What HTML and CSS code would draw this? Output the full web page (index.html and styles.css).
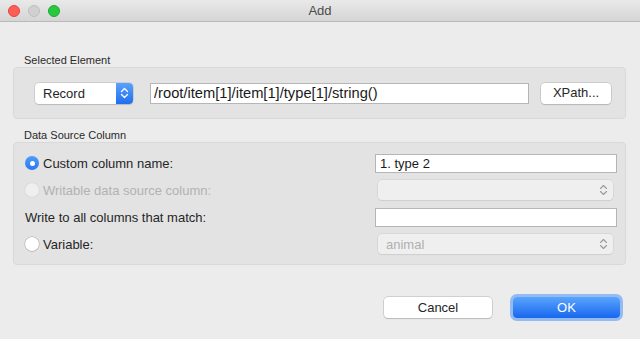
FILE: index.html
```html
<!DOCTYPE html>
<html lang="en">

<head>
    <meta charset="UTF-8">
    <title>Add</title>
    <link rel="stylesheet" href="styles.css">
</head>

<body>
    <div class="window">
        <div class="titlebar">
            <div class="lights">
                <span class="light red"></span>
                <span class="light grey"></span>
                <span class="light green"></span>
            </div>
            <div class="title">Add</div>
        </div>

        <div class="content">
            <div class="group-label first">Selected Element</div>
            <div class="box box-element">
                <div class="popup">
                    <span class="popup-text">Record</span>
                    <span class="popup-arrows">
                        <svg width="9" height="12" viewBox="0 0 9 12">
                            <path d="M1.5 4.5 L4.5 1.5 L7.5 4.5 M1.5 7.5 L4.5 10.5 L7.5 7.5" fill="none" stroke="#fff" stroke-width="1.3" stroke-linecap="round" stroke-linejoin="round"/>
                        </svg>
                    </span>
                </div>
                <input class="field field-path" type="text" value="/root/item[1]/item[1]/type[1]/string()">
                <button class="btn btn-xpath">XPath...</button>
            </div>

            <div class="group-label">Data Source Column</div>
            <div class="box box-source">
                <div class="row">
                    <label class="option"><span class="radio checked"></span>Custom column name:</label>
                    <input class="field field-right" type="text" value="1. type 2">
                </div>
                <div class="row">
                    <label class="option disabled"><span class="radio"></span>Writable data source column:</label>
                    <div class="select-disabled">
                        <span></span>
                        <svg width="9" height="12" viewBox="0 0 9 12">
                            <path d="M1.5 4.5 L4.5 1.5 L7.5 4.5 M1.5 7.5 L4.5 10.5 L7.5 7.5" fill="none" stroke="#9a9a9a" stroke-width="1.1" stroke-linecap="round" stroke-linejoin="round"/>
                        </svg>
                    </div>
                </div>
                <div class="row">
                    <label class="option plain">Write to all columns that match:</label>
                    <input class="field field-right" type="text" value="">
                </div>
                <div class="row">
                    <label class="option"><span class="radio"></span>Variable:</label>
                    <div class="select-disabled">
                        <span>animal</span>
                        <svg width="9" height="12" viewBox="0 0 9 12">
                            <path d="M1.5 4.5 L4.5 1.5 L7.5 4.5 M1.5 7.5 L4.5 10.5 L7.5 7.5" fill="none" stroke="#9a9a9a" stroke-width="1.1" stroke-linecap="round" stroke-linejoin="round"/>
                        </svg>
                    </div>
                </div>
            </div>

            <div class="actions">
                <button class="btn btn-cancel">Cancel</button>
                <button class="btn btn-ok">OK</button>
            </div>
        </div>
    </div>
</body>

</html>
```

FILE: styles.css
```css
html, body {
    margin: 0;
    padding: 0;
}

body {
    font-family: "Liberation Sans", Arial, sans-serif;
    font-size: 13px;
    color: #262626;
    background-color: #ececec;
    width: 640px;
    height: 339px;
    overflow: hidden;
}

.window {
    height: 339px;
    background: #ececec;
}

.titlebar {
    position: relative;
    height: 21px;
    background: linear-gradient(#e9e9e9, #d5d5d5);
    border-bottom: 1px solid #b9b9b9;
    display: flex;
    align-items: center;
    justify-content: center;
}

.title {
    font-size: 13px;
    color: #4b4b4b;
}

.lights {
    position: absolute;
    left: 8px;
    top: 5px;
    display: flex;
    gap: 8px;
}

.light {
    width: 12px;
    height: 12px;
    border-radius: 50%;
    box-sizing: border-box;
}

.light.red {
    background: #fd5f57;
    border: 1px solid #e2463f;
}

.light.grey {
    background: #d0d0d0;
    border: 1px solid #bfbfbf;
}

.light.green {
    background: #28c93f;
    border: 1px solid #1eab2f;
}

.content {
    padding: 0 14px 0 13px;
}

.group-label {
    font-size: 11px;
    line-height: 14px;
    height: 14px;
    padding-left: 11px;
    margin-top: 9px;
    color: #2a2a2a;
}

.group-label.first {
    margin-top: 31px;
}

.box {
    background: #e3e3e3;
    border: 1px solid #d9d9d9;
    border-radius: 4px;
    box-sizing: border-box;
}

.box-element {
    height: 52px;
    display: flex;
    align-items: center;
    padding: 0 14px 0 21px;
}

.popup {
    width: 98px;
    height: 21px;
    display: flex;
    background: #fff;
    border-radius: 4px;
    box-shadow: 0 0 0 0.5px #b8b8b8, 0 1px 1px rgba(0, 0, 0, 0.15);
    overflow: hidden;
    flex-shrink: 0;
}

.popup-text {
    flex: 1;
    padding-left: 8px;
    line-height: 21px;
}

.popup-arrows {
    width: 17px;
    background: linear-gradient(#5aa2fb, #1e6ff0);
    display: flex;
    align-items: center;
    justify-content: center;
}

.field {
    font-family: inherit;
    font-size: 13px;
    color: #1a1a1a;
    background: #fff;
    border: 1px solid #b6b6b6;
    box-sizing: border-box;
    outline: none;
    margin: 0;
}

.field-path {
    width: 379px;
    height: 21px;
    margin-left: 17px;
    padding: 0 3px;
    font-size: 14.7px;
}

.btn {
    font-family: inherit;
    font-size: 13px;
    color: #262626;
    background: #fff;
    border: none;
    border-radius: 4px;
    box-shadow: 0 0 0 0.5px #b3b3b3, 0 1px 1px rgba(0, 0, 0, 0.18);
    padding: 0;
    margin: 0;
}

.btn-xpath {
    width: 70px;
    height: 21px;
    margin-left: auto;
    padding-bottom: 2px;
}

.box-source {
    height: 123px;
    padding: 10px 8px 0 11px;
    display: flex;
    flex-direction: column;
    gap: 7px;
}

.row {
    height: 20px;
    display: flex;
    align-items: center;
    justify-content: space-between;
}

.option {
    display: flex;
    align-items: center;
}

.option.disabled {
    color: #b2b2b2;
}

.radio {
    width: 14px;
    height: 14px;
    box-sizing: border-box;
    border-radius: 50%;
    background: #fff;
    box-shadow: 0 0 0 0.5px #a8a8a8, 0 0.5px 1px rgba(0, 0, 0, 0.2);
    margin-right: 4px;
    position: relative;
}

.radio.checked {
    background: linear-gradient(#4f9cf9, #2a78f2);
    box-shadow: none;
}

.radio.checked::after {
    content: "";
    position: absolute;
    left: 4.5px;
    top: 4.5px;
    width: 5px;
    height: 5px;
    border-radius: 50%;
    background: #fff;
}

.option.disabled .radio {
    background: #efefef;
    box-shadow: 0 0 0 0.5px #d0d0d0;
}

.field-right {
    width: 242px;
    height: 19px;
    padding: 0 4px;
}

.select-disabled {
    width: 235px;
    height: 20px;
    margin-right: 4px;
    box-sizing: border-box;
    background: #efefef;
    border-radius: 4px;
    box-shadow: 0 0 0 0.5px #cdcdcd, 0 1px 1px rgba(0, 0, 0, 0.08);
    display: flex;
    align-items: center;
    justify-content: space-between;
    padding: 0 5px 0 8px;
    color: #b0b0b0;
}

.actions {
    display: flex;
    justify-content: flex-end;
    gap: 21px;
    margin-top: 32px;
    padding-right: 6px;
}

.btn-cancel {
    width: 108px;
    height: 21px;
}

.btn-ok {
    width: 107px;
    height: 21px;
    color: #fff;
    background: linear-gradient(#5ba4fb, #1767f0);
    box-shadow: 0 0 0 3px rgba(74, 145, 245, 0.55);
}
```
